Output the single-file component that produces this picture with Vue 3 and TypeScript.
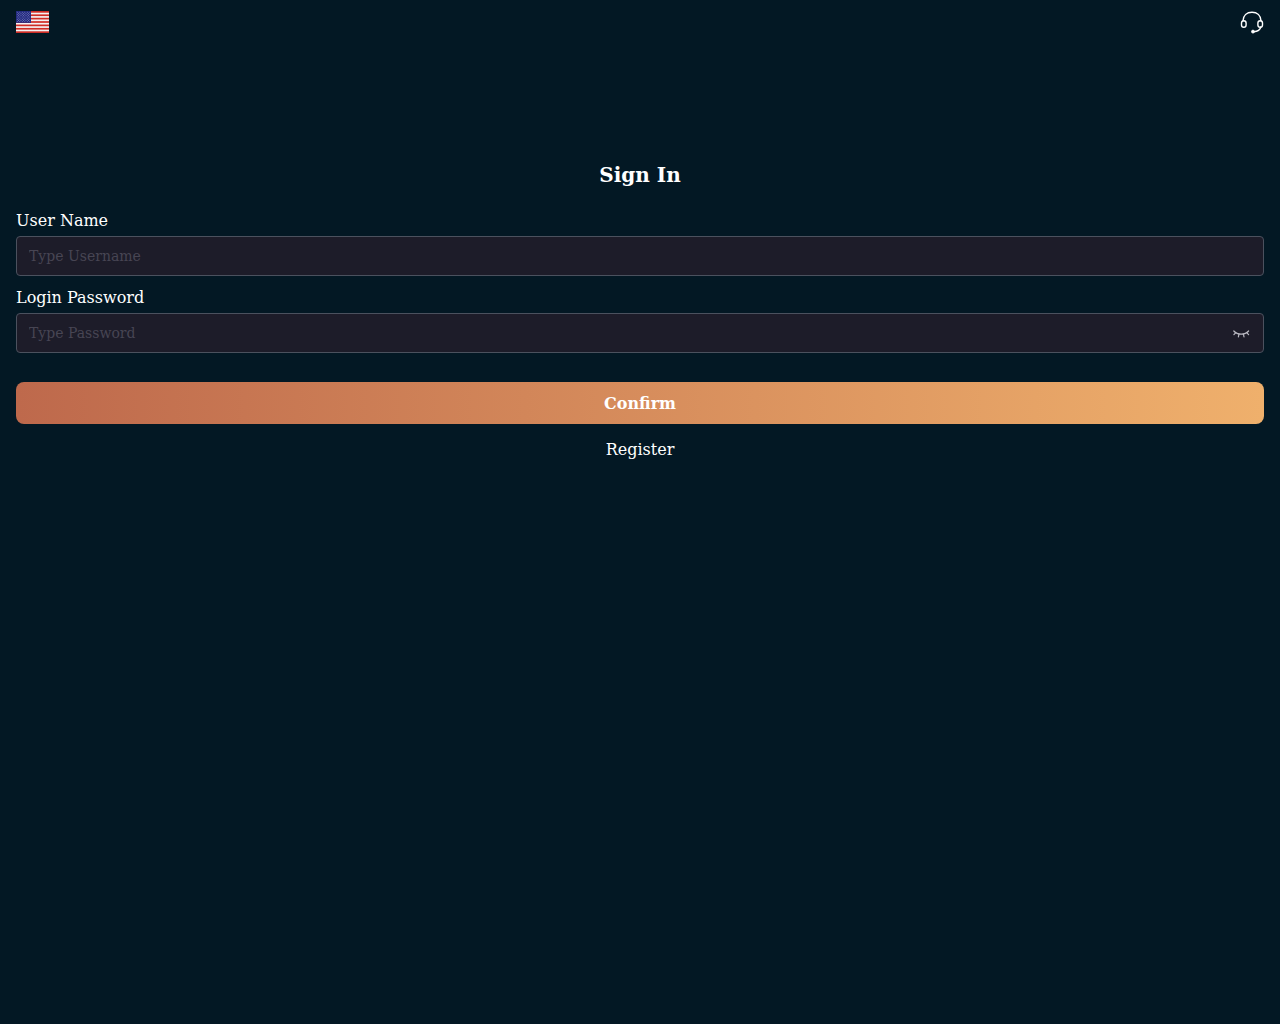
<script setup lang="ts">
import { ref } from 'vue'

const username = ref('')
const password = ref('')
const showPassword = ref(false)

const stripes = [0, 2, 4, 6, 8, 10, 12]
const stars: { x: number; y: number }[] = []
for (let row = 0; row < 9; row++) {
  for (let col = 0; col < (row % 2 ? 5 : 6); col++) {
    stars.push({ x: 13 + col * 25 + (row % 2 ? 12 : 0), y: 14 + row * 14 })
  }
}
</script>

<template>
  <div class="page">
    <header class="topbar">
      <button type="button" class="icon-button" aria-label="Language">
        <svg class="flag" viewBox="0 0 330 260" preserveAspectRatio="none">
          <rect width="330" height="260" fill="#f4f1f2" />
          <rect v-for="s in stripes" :key="s" :y="s * 20" width="330" height="20" fill="#cf2c25" />
          <rect width="150" height="140" fill="#22297f" />
          <circle v-for="(star, i) in stars" :key="i" :cx="star.x" :cy="star.y" r="5" fill="#a5a9d8" />
        </svg>
      </button>
      <button type="button" class="icon-button" aria-label="Customer service">
        <svg class="headset" viewBox="0 0 24 24" fill="none" stroke="#fff" stroke-width="1.4" stroke-linecap="round">
          <path d="M3 10.8C3.2 5.4 6.9 2.2 12 2.2s8.8 3.2 9 8.6" />
          <rect x="1.5" y="10.8" width="4.6" height="6.4" rx="2.3" />
          <rect x="17.9" y="10.8" width="4.6" height="6.4" rx="2.3" />
          <path d="M20.8 17c-.6 2.6-3 4.5-7 4.7" />
          <circle cx="13" cy="21.6" r="1.5" fill="#fff" stroke-width="0.8" />
        </svg>
      </button>
    </header>

    <main class="content">
      <h1 class="title">Sign In</h1>
      <form @submit.prevent>
        <label class="label" for="username">User Name</label>
        <div class="field">
          <input id="username" v-model="username" type="text" placeholder="Type Username" autocomplete="username" />
        </div>
        <label class="label" for="password">Login Password</label>
        <div class="field">
          <input
            id="password"
            v-model="password"
            :type="showPassword ? 'text' : 'password'"
            placeholder="Type Password"
            autocomplete="current-password"
          />
          <button type="button" class="icon-button" aria-label="Show password" @click="showPassword = !showPassword">
            <svg class="eye" viewBox="0 0 18 18" fill="none" stroke="#b9b8c1" stroke-width="1.2" stroke-linecap="round">
              <path d="M1.8 7C5.6 11.2 12.8 11.2 16.6 7" />
              <path d="M3.6 8.8 1.9 10.6M7 10.2 6.4 12.8M11.4 10.2l.6 2.6M14.9 8.8l1.7 1.8" />
            </svg>
          </button>
        </div>
        <button type="submit" class="confirm">Confirm</button>
      </form>
      <a class="register" href="#">Register</a>
    </main>
  </div>
</template>

<style>
body {
  margin: 0;
  background: #031824;
}
</style>

<style scoped>
.page {
  min-height: 100vh;
  color: #fff;
  background: #031824;
  font-family: "DejaVu Serif", serif;
  font-size: 16px;
  line-height: 24px;
}

.topbar {
  display: flex;
  align-items: center;
  justify-content: space-between;
  height: 44px;
  padding: 0 16px;
}

.icon-button {
  display: flex;
  padding: 0;
  border: 0;
  background: none;
  cursor: pointer;
}

.flag {
  width: 33px;
  height: 22px;
}

.headset {
  width: 24px;
  height: 24px;
}

.eye {
  width: 18px;
  height: 18px;
}

.content {
  display: flex;
  flex-direction: column;
  padding: 117px 16px 0;
}

.title {
  margin: 0 0 20px;
  font-size: 20px;
  line-height: 28px;
  text-align: center;
}

.label {
  display: block;
  margin-bottom: 3px;
}

.field {
  display: flex;
  align-items: center;
  box-sizing: border-box;
  height: 40px;
  margin-bottom: 10px;
  padding: 0 13px 0 12px;
  border: 1px solid #4b515e;
  border-radius: 4px;
  background: #1d1c29;
}

.field input {
  flex: 1;
  min-width: 0;
  padding: 0;
  border: 0;
  outline: 0;
  color: #fff;
  background: none;
  font-family: inherit;
  font-size: 14px;
  line-height: 24px;
}

.field input::placeholder {
  color: #474553;
  opacity: 1;
}

.confirm {
  display: block;
  width: 100%;
  height: 42px;
  margin-top: 29px;
  padding: 0;
  border: 0;
  border-radius: 8px;
  color: #fff;
  background: linear-gradient(90deg, #be694c, #efb06c);
  font-family: inherit;
  font-size: 16px;
  font-weight: 700;
  cursor: pointer;
}

.register {
  align-self: center;
  margin-top: 14px;
  color: #fff;
  text-decoration: none;
}
</style>
